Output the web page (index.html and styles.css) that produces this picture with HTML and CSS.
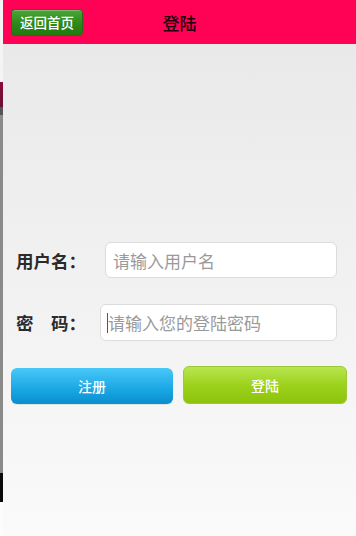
FILE: index.html
```html
<!DOCTYPE html>
<html lang="zh-CN">
<head>
<meta charset="utf-8">
<title>登陆</title>
<link rel="stylesheet" href="styles.css">
</head>
<body>
<div class="page">
  <div class="edge">
    <div class="edge-light"></div>
    <div class="edge-pink"></div>
    <div class="edge-dark"></div>
    <div class="edge-grey"></div>
    <div class="edge-black"></div>
    <div class="edge-white"></div>
  </div>
  <div class="main">
    <header class="topbar">
      <a class="back-btn">返回首页</a>
      <h1 class="title">登陆</h1>
    </header>
    <section class="content">
      <div class="row row-user">
        <span class="label">用户名：</span>
        <input class="field field-user" type="text" placeholder="请输入用户名">
      </div>
      <div class="row row-pass">
        <span class="label">密　码：</span>
        <div class="field-wrap">
          <input class="field field-pass" type="password" placeholder="请输入您的登陆密码">
          <span class="caret"></span>
        </div>
      </div>
      <div class="actions">
        <button class="btn btn-reg">注册</button>
        <button class="btn btn-login">登陆</button>
      </div>
    </section>
  </div>
</div>
</body>
</html>
```
FILE: styles.css
```css
html, body {
  margin: 0;
  padding: 0;
  height: 100%;
}
body {
  font-family: "Noto Sans CJK SC", "Noto Sans", sans-serif;
  background: #fafafa;
}
.page {
  display: flex;
  height: 536px;
  overflow: hidden;
}
.edge {
  width: 3px;
  display: flex;
  flex-direction: column;
  flex: none;
}
.edge-light { height: 82px; background: #f4f4f4; }
.edge-pink { height: 25px; background: linear-gradient(#8a0a3a, #6a1035); }
.edge-dark { height: 8px; background: #555; }
.edge-grey { height: 358px; background: #8a8a8a; }
.edge-black { height: 29px; background: #0a0a0a; }
.edge-white { flex: 1; background: #fcfcfc; }

.main {
  flex: 1;
  display: flex;
  flex-direction: column;
  min-width: 0;
}
.topbar {
  height: 44px;
  background: #ff0256;
  display: flex;
  align-items: center;
  position: relative;
  flex: none;
}
.back-btn {
  margin-left: 8px;
  margin-top: 1px;
  width: 72px;
  height: 27px;
  box-sizing: border-box;
  border: 1px solid #2b6a1c;
  border-radius: 4px;
  background: linear-gradient(#49a63a, #2c8a18 55%, #237810);
  color: #fff;
  font-size: 13.5px;
  font-weight: 500;
  line-height: 25px;
  text-align: center;
  box-shadow: inset 0 1px 0 rgba(255,255,255,0.25);
}
.title {
  position: absolute;
  left: 0;
  right: 0;
  top: 0;
  margin: 0;
  text-align: center;
  font-size: 17px;
  font-weight: 500;
  line-height: 46px;
  color: #1e000a;
  pointer-events: none;
}
.content {
  flex: 1;
  background: linear-gradient(#e9e9e9, #fafafa);
  padding: 198px 9px 0 8px;
  display: flex;
  flex-direction: column;
}
.row {
  display: flex;
  align-items: center;
}
.label {
  font-size: 17.5px;
  font-weight: bold;
  color: #2b2b2b;
  padding-left: 5px;
  flex: none;
}
.row-user .label { width: 89px; }
.row-pass .label { width: 84px; }
.row-user { height: 36px; margin-right: 10px; }
.row-pass { height: 37px; margin-top: 26px; margin-right: 10px; }
.field {
  box-sizing: border-box;
  width: 100%;
  height: 100%;
  border: 1px solid #dcdcdc;
  border-radius: 6px;
  background: #fff;
  font-family: inherit;
  font-size: 17px;
  color: #333;
  padding: 0 0 0 7px;
  outline: none;
}
.field::placeholder { color: #9a9a9a; }
.field-user { flex: 1; }
.field-wrap {
  flex: 1;
  height: 100%;
  position: relative;
}
.caret {
  position: absolute;
  left: 7px;
  top: 9px;
  width: 1px;
  height: 20px;
  background: #555;
}
.actions {
  display: flex;
  gap: 10px;
  margin-top: 25px;
  align-items: flex-end;
}
.btn {
  flex: 1;
  border: 0;
  border-radius: 6px;
  color: #fff;
  font-family: inherit;
  font-size: 14px;
  font-weight: 500;
  padding: 0;
}
.btn-reg {
  height: 36px;
  background: linear-gradient(#48c8f8, #1aa6e4 60%, #0a8ecd);
  box-shadow: 0 1px 0 rgba(0,0,0,0.08);
}
.btn-login {
  height: 38px;
  background: linear-gradient(#b8e650, #9dd21c 50%, #8ec30b);
  border: 1px solid #9cc83a;
}
```
